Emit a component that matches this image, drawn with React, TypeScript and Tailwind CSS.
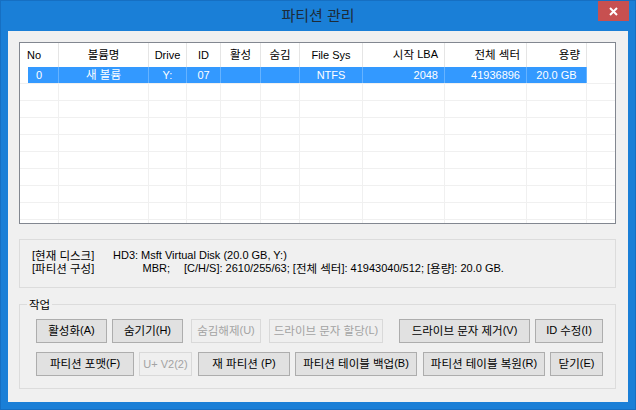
import React from 'react';

type Align = 'left' | 'center' | 'right';

// Hangul glyphs in the original (Malgun Gothic) sit larger than the Latin ones (Tahoma)
const K: React.FC<{ children: string }> = ({ children }) => (
  <>
    {children.split(/([\uAC00-\uD7A3][\uAC00-\uD7A3 ]*)/).map((part, i) =>
      /[\uAC00-\uD7A3]/.test(part) ? (
        <span key={i} className="text-[11.5px] align-[-1px]">
          {part}
        </span>
      ) : (
        part
      )
    )}
  </>
);

const columns: { w: string; label: string; head: Align; cell: Align }[] = [
  { w: 'w-[39px]', label: 'No', head: 'left', cell: 'left' },
  { w: 'w-[90px]', label: '볼륨명', head: 'center', cell: 'center' },
  { w: 'w-[38px]', label: 'Drive', head: 'center', cell: 'center' },
  { w: 'w-[34px]', label: 'ID', head: 'center', cell: 'center' },
  { w: 'w-[40px]', label: '활성', head: 'center', cell: 'center' },
  { w: 'w-[39px]', label: '숨김', head: 'center', cell: 'center' },
  { w: 'w-[63px]', label: 'File Sys', head: 'center', cell: 'center' },
  { w: 'w-[82px]', label: '시작 LBA', head: 'right', cell: 'right' },
  { w: 'w-[82px]', label: '전체 섹터', head: 'right', cell: 'right' },
  { w: 'w-[60px]', label: '용량', head: 'right', cell: 'center' },
];

const alignClass: Record<Align, string> = {
  left: 'justify-start pl-[7px]',
  center: 'justify-center',
  right: 'justify-end pr-[6px]',
};

const partition = ['0', '새 볼륨', 'Y:', '07', '', '', 'NTFS', '2048', '41936896', '20.0 GB'];

const Button: React.FC<{ label: string; w: string; ml?: string; disabled?: boolean }> = ({
  label,
  w,
  ml = '',
  disabled,
}) => (
  <div
    className={`${w} ${ml} h-[24px] shrink-0 flex items-center justify-center border whitespace-pre ${
      disabled ? 'border-[#d9d9d9] bg-[#efefef] text-[#a3a3a3]' : 'border-[#adadad] bg-[#e1e1e1] text-black'
    }`}
  >
    <span>
      <K>{label}</K>
    </span>
  </div>
);

const PartitionList: React.FC = () => (
  <div className="h-[182px] border border-[#828790] bg-white overflow-hidden">
    <div className="flex h-[24px]">
      {columns.map((c) => (
        <div
          key={c.label}
          className={`${c.w} shrink-0 flex items-center whitespace-pre border-r border-[#e5e5e5] ${alignClass[c.head]}`}
        >
          <span>
            <K>{c.label}</K>
          </span>
        </div>
      ))}
      <div className="flex-1" />
    </div>
    <div className="flex h-[17px] border-b border-[#f0f0f0] text-white">
      {columns.map((c, i) =>
        i === 0 ? (
          <div key={c.label} className={`${c.w} shrink-0 border-r border-[#66b3ff]`}>
            <div className="ml-[8px] h-full bg-[#3399ff] flex items-center pl-[8px]">{partition[0]}</div>
          </div>
        ) : (
          <div
            key={c.label}
            className={`${c.w} shrink-0 flex items-center whitespace-pre bg-[#3399ff] border-r border-[#66b3ff] ${alignClass[c.cell]}`}
          >
            <span>
              <K>{partition[i]}</K>
            </span>
          </div>
        )
      )}
      <div className="flex-1" />
    </div>
    {Array.from({ length: 9 }).map((_, r) => (
      <div key={r} className="flex h-[17px] border-b border-[#f0f0f0]">
        {columns.map((c) => (
          <div key={c.label} className={`${c.w} shrink-0 border-r border-[#f0f0f0]`} />
        ))}
        <div className="flex-1" />
      </div>
    ))}
  </div>
);

const App: React.FC = () => {
  return (
    <div
      className="w-[636px] h-[410px] bg-[#1a7fd7] border border-[#166fc2] flex flex-col text-[11px] text-black"
      style={{ fontFamily: '"Liberation Sans", "Noto Sans CJK KR", sans-serif' }}
    >
      <div className="relative h-[30px] flex items-center justify-center">
        <span className="text-[15px] text-[#1d2b38]">파티션 관리</span>
        <div className="absolute right-[6px] top-0 w-[31px] h-[20px] bg-[#c75050] flex items-center justify-center">
          <svg width="9" height="9" viewBox="0 0 9 9">
            <path d="M1 1 L8 8 M8 1 L1 8" stroke="white" strokeWidth="2" />
          </svg>
        </div>
      </div>

      <div className="mx-[7px] mb-[7px] flex-1 bg-[#f0f0f0] pt-[11px] pl-[11px] pr-[12px]">
        <PartitionList />

        <div className="mt-[15px] h-[49px] border border-[#dcdcdc] pl-[12px] pt-[9px] leading-[13px] whitespace-pre">
          <div className="flex items-center h-[13px]">
            <span className="w-[81px] shrink-0">
              <K>[현재 디스크]</K>
            </span>
            <span>HD3: Msft Virtual Disk (20.0 GB, Y:)</span>
          </div>
          <div className="flex items-center h-[13px]">
            <span className="w-[81px] shrink-0">
              <K>[파티션 구성]</K>
            </span>
            <span className="w-[57px] shrink-0 text-right">MBR;</span>
            <span className="ml-[14px]">
              <K>[C/H/S]: 2610/255/63; [전체 섹터]: 41943040/512; [용량]: 20.0 GB.</K>
            </span>
          </div>
        </div>

        <div className="relative mt-[16px] h-[85px] border border-[#dcdcdc] pt-[14px] pl-[16px]">
          <span className="absolute -top-[8px] left-[7px] px-[2px] bg-[#f0f0f0] leading-[14px]">
            <K>작업</K>
          </span>
          <div className="flex">
            <Button label="활성화(A)" w="w-[71px]" />
            <Button label="숨기기(H)" w="w-[71px]" ml="ml-[5px]" />
            <Button label="숨김해제(U)" w="w-[70px]" ml="ml-[8px]" disabled />
            <Button label="드라이브 문자 할당(L)" w="w-[114px]" ml="ml-[8px]" disabled />
            <Button label="드라이브 문자 제거(V)" w="w-[131px]" ml="ml-[16px]" />
            <Button label="ID 수정(I)" w="w-[68px]" ml="ml-[5px]" />
          </div>
          <div className="flex mt-[9px]">
            <Button label="파티션 포맷(F)" w="w-[98px]" />
            <Button label="U+ V2(2)" w="w-[53px]" ml="ml-[5px]" disabled />
            <Button label="재 파티션 (P)" w="w-[92px]" ml="ml-[6px]" />
            <Button label="파티션 테이블 백업(B)" w="w-[122px]" ml="ml-[5px]" />
            <Button label="파티션 테이블 복원(R)" w="w-[122px]" ml="ml-[6px]" />
            <Button label="닫기(E)" w="w-[53px]" ml="ml-[5px]" />
          </div>
        </div>
      </div>
    </div>
  );
};

export default App;
